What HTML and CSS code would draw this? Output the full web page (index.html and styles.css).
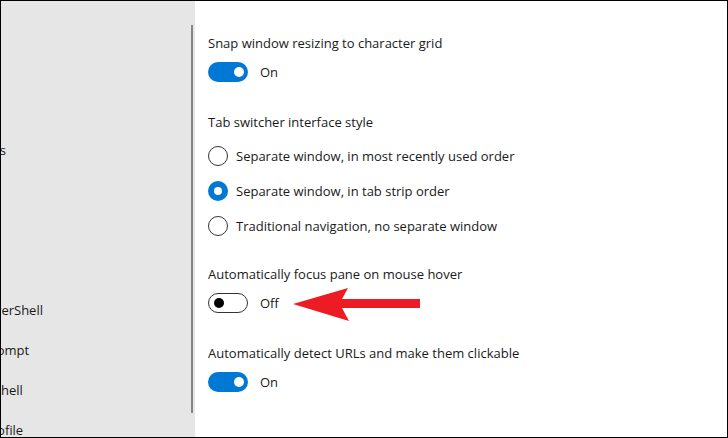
FILE: index.html
```html
<!DOCTYPE html>
<html>
<head>
    <title>Settings - Interaction</title>
    <link rel="stylesheet" href="styles.css">
</head>
<body>
    <div class="window">
        <div class="sidebar">
            <ul class="nav">
                <li>Startup</li>
                <li>Interaction</li>
                <li>Appearance</li>
                <li>Color schemes</li>
                <li>Rendering</li>
                <li>Actions</li>
                <li>Defaults</li>
                <li>Windows PowerShell</li>
                <li>Command Prompt</li>
                <li>Azure Cloud Shell</li>
                <li>Add a new profile</li>
            </ul>
            <div class="scroll-thumb"></div>
        </div>

        <div class="content">
            <div class="setting">
                <div class="setting-label">Snap window resizing to character grid</div>
                <div class="toggle-row">
                    <span class="toggle on"><span class="knob"></span></span>
                    <span>On</span>
                </div>
            </div>

            <div class="setting">
                <div class="setting-label radio-title">Tab switcher interface style</div>
                <div class="radio-group">
                    <label class="radio-row"><span class="radio"></span> Separate window, in most recently used order</label>
                    <label class="radio-row"><span class="radio checked"></span> Separate window, in tab strip order</label>
                    <label class="radio-row"><span class="radio"></span> Traditional navigation, no separate window</label>
                </div>
            </div>

            <div class="setting">
                <div class="setting-label">Automatically focus pane on mouse hover</div>
                <div class="toggle-row">
                    <span class="toggle off"><span class="knob"></span></span>
                    <span>Off</span>
                </div>
            </div>

            <div class="setting">
                <div class="setting-label">Automatically detect URLs and make them clickable</div>
                <div class="toggle-row">
                    <span class="toggle on"><span class="knob"></span></span>
                    <span>On</span>
                </div>
            </div>
        </div>

        <!-- annotation arrow drawn over the screenshot -->
        <svg class="arrow" width="728" height="438" viewBox="0 0 728 438">
            <polygon points="293,304 348,288 342,299 420,299 420,308 342,308 349,321" fill="#ed1c24"/>
        </svg>
    </div>
</body>
</html>
```

FILE: styles.css
```css
html, body {
    margin: 0;
    padding: 0;
}
body {
    font-family: "Open Sans", "Noto Sans", sans-serif;
    font-size: 13px;
    color: #1a1a1a;
    background: #fff;
}
.window {
    position: relative;
    width: 728px;
    height: 438px;
    box-sizing: border-box;
    border: 1px solid #000;
    display: flex;
    overflow: hidden;
}
.sidebar {
    position: relative;
    width: 194px;
    flex-shrink: 0;
    background: #e6e6e6;
    overflow: hidden;
}
.nav {
    list-style: none;
    margin: 9px 0 0 -84px;
    padding: 0;
}
.nav li {
    height: 40px;
    line-height: 40px;
    white-space: nowrap;
}
.scroll-thumb {
    position: absolute;
    left: 190px;
    top: 24px;
    width: 2px;
    height: 388px;
    background: #858585;
}
.content {
    flex: 1;
    padding: 32px 0 0 13px;
}
.setting {
    margin-bottom: 30px;
}
.setting:nth-child(2) {
    margin-bottom: 28px;
}
.setting-label {
    height: 20px;
    line-height: 20px;
    margin-bottom: 9px;
}
.radio-title {
    margin-bottom: 14px;
}
.toggle-row {
    display: flex;
    align-items: center;
    gap: 12px;
    height: 20px;
}
.toggle {
    position: relative;
    width: 40px;
    height: 20px;
    box-sizing: border-box;
    border-radius: 10px;
}
.toggle.on {
    background: #0078d4;
}
.toggle.off {
    border: 1px solid #333;
    background: #fff;
}
.knob {
    position: absolute;
    top: 50%;
    width: 10px;
    height: 10px;
    margin-top: -5px;
    border-radius: 50%;
}
.toggle.on .knob {
    right: 4px;
    background: #fff;
}
.toggle.off .knob {
    left: 5px;
    background: #000;
}
.radio-group {
    display: flex;
    flex-direction: column;
    gap: 15px;
}
.radio-row {
    display: flex;
    align-items: center;
    gap: 8px;
    height: 20px;
}
.radio {
    width: 20px;
    height: 20px;
    box-sizing: border-box;
    border: 1px solid #333;
    border-radius: 50%;
    background: #fff;
}
.radio.checked {
    border: 6px solid #0078d4;
}
.arrow {
    position: absolute;
    left: -1px;
    top: -1px;
    pointer-events: none;
}
```
